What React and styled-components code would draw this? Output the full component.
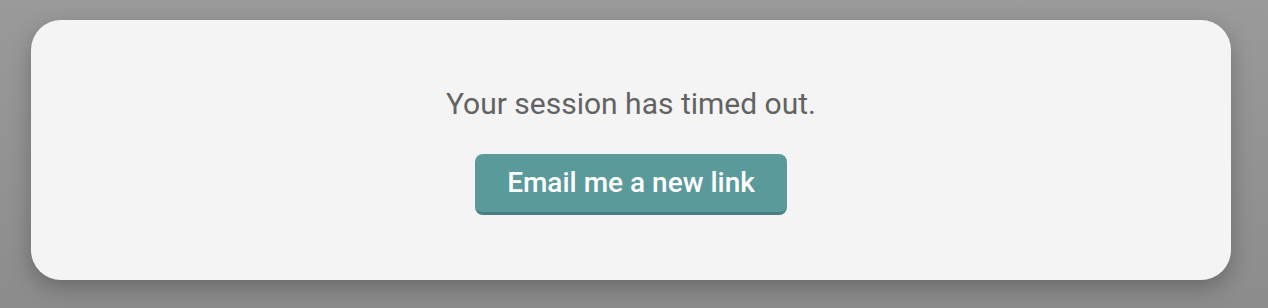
import React from "react";
import styled, { createGlobalStyle } from "styled-components";

const GlobalStyle = createGlobalStyle`
  html, body {
    margin: 0;
    padding: 0;
    background: #969696;
    font-family: Roboto, "Noto Sans", sans-serif;
  }
`;

const Page = styled.div`
  padding: 20px 37px 28px 31px;
  min-height: 308px;
  box-sizing: border-box;
  background: linear-gradient(180deg, #9a9a9a 0%, #8c8c8c 100%);
`;

const Card = styled.div`
  width: 1200px;
  height: 260px;
  box-sizing: border-box;
  padding-top: 64px;
  background: #f4f4f4;
  border-radius: 30px;
  box-shadow: 0 8px 22px rgba(0, 0, 0, 0.25);
  display: flex;
  flex-direction: column;
  align-items: center;
`;

const Message = styled.p`
  margin: 0 0 31px;
  font-size: 30px;
  line-height: 39px;
  color: #636363;
`;

const Button = styled.button`
  width: 312px;
  height: 61px;
  box-sizing: border-box;
  border: none;
  border-bottom: 3px solid #497f80;
  border-radius: 8px;
  background: #5b9a9b;
  color: #fff;
  font-family: Roboto, "Noto Sans", sans-serif;
  font-size: 28px;
  font-weight: 500;
  line-height: 1;
  cursor: pointer;
  padding: 0;
`;

export default function App() {
  return (
    <>
      <GlobalStyle />
      <Page>
        <Card>
          <Message>Your session has timed out.</Message>
          <Button>Email me a new link</Button>
        </Card>
      </Page>
    </>
  );
}
